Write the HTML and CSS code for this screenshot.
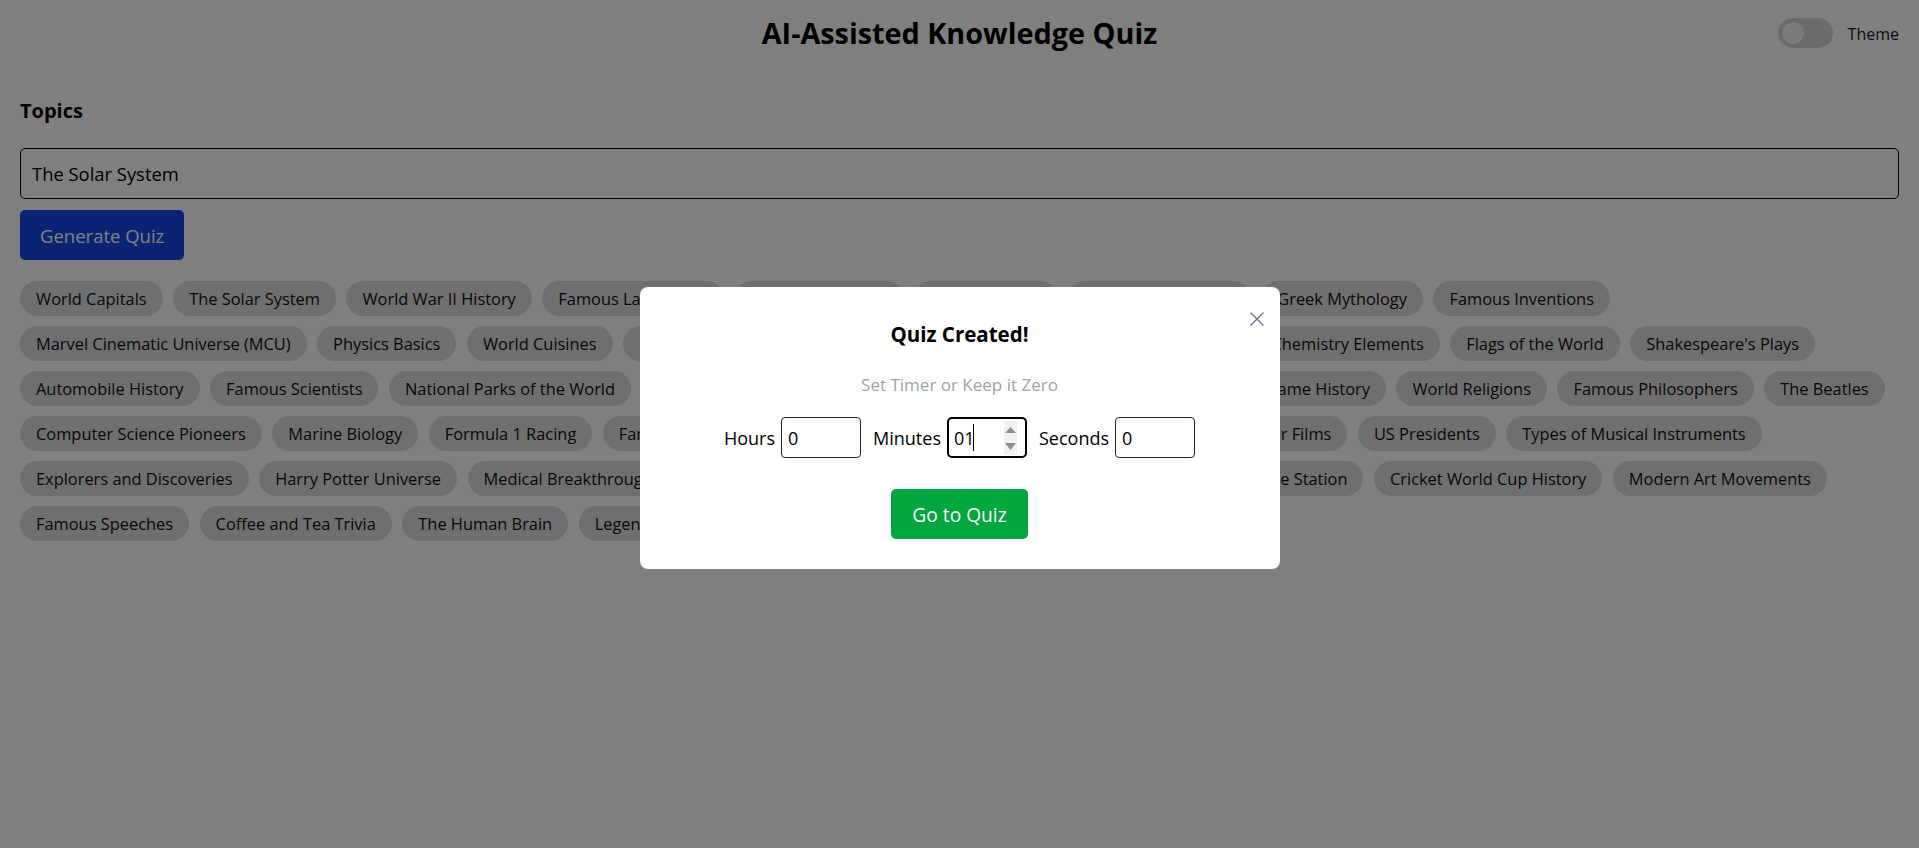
FILE: index.html
```html
<!DOCTYPE html>
<html lang="en">
<head>
<meta charset="utf-8">
<title>AI-Assisted Knowledge Quiz</title>
<link rel="stylesheet" href="styles.css">
</head>
<body>
<div class="app">
  <header class="topbar">
    <h1 class="title">AI-Assisted Knowledge Quiz</h1>
    <label class="theme-toggle">
      <span class="switch"><span class="knob"></span></span>
      <span class="theme-label">Theme</span>
    </label>
  </header>
  <main class="main">
    <section class="form">
      <h2 class="section-title">Topics</h2>
      <input class="topic-input" type="text" value="The Solar System">
      <button class="btn-generate" type="button">Generate Quiz</button>
    </section>
    <div class="chips">
      <span class="chip">World Capitals</span>
      <span class="chip">The Solar System</span>
      <span class="chip">World War II History</span>
      <span class="chip">Famous Landmarks</span>
      <span class="chip">Space Exploration</span>
      <span class="chip">Mount Everest</span>
      <span class="chip">Ancient Civilizations</span>
      <span class="chip">Greek Mythology</span>
      <span class="chip">Famous Inventions</span>
      <span class="chip">Marvel Cinematic Universe (MCU)</span>
      <span class="chip">Physics Basics</span>
      <span class="chip">World Cuisines</span>
      <span class="chip">Famous Paintings</span>
      <span class="chip">Ocean Currents</span>
      <span class="chip">Coral Reefs</span>
      <span class="chip">Renaissance Art</span>
      <span class="chip">Chemistry Elements</span>
      <span class="chip">Flags of the World</span>
      <span class="chip">Shakespeare's Plays</span>
      <span class="chip">Automobile History</span>
      <span class="chip">Famous Scientists</span>
      <span class="chip">National Parks of the World</span>
      <span class="chip">Roman Empire</span>
      <span class="chip">Classical Music</span>
      <span class="chip">Weather</span>
      <span class="chip">Human Body</span>
      <span class="chip">Video Game History</span>
      <span class="chip">World Religions</span>
      <span class="chip">Famous Philosophers</span>
      <span class="chip">The Beatles</span>
      <span class="chip">Computer Science Pioneers</span>
      <span class="chip">Marine Biology</span>
      <span class="chip">Formula 1 Racing</span>
      <span class="chip">Famous Artists</span>
      <span class="chip">Wonders of the World</span>
      <span class="chip">Rainforests</span>
      <span class="chip">Bird Species</span>
      <span class="chip">Pixar Films</span>
      <span class="chip">US Presidents</span>
      <span class="chip">Types of Musical Instruments</span>
      <span class="chip">Explorers and Discoveries</span>
      <span class="chip">Harry Potter Universe</span>
      <span class="chip">Medical Breakthroughs</span>
      <span class="chip">Ancient Greece</span>
      <span class="chip">World Geography</span>
      <span class="chip">Glaciers</span>
      <span class="chip">International Space Station</span>
      <span class="chip">Cricket World Cup History</span>
      <span class="chip">Modern Art Movements</span>
      <span class="chip">Famous Speeches</span>
      <span class="chip">Coffee and Tea Trivia</span>
      <span class="chip">The Human Brain</span>
      <span class="chip">Legendary Athletes</span>
      <span class="chip">Mythical Creatures</span>
    </div>
  </main>
</div>

<div class="overlay">
  <div class="modal" role="dialog" aria-modal="true">
    <button class="close" type="button" aria-label="Close">
      <svg viewBox="0 0 14 14" width="14" height="14"><path d="M1 1 L13 13 M13 1 L1 13" stroke="#64748b" stroke-width="1.4" fill="none" stroke-linecap="round"/></svg>
    </button>
    <h3 class="modal-title">Quiz Created!</h3>
    <p class="modal-sub">Set Timer or Keep it Zero</p>
    <div class="timer">
      <label class="field">Hours <input class="time-input" type="text" value="0"></label>
      <label class="field">Minutes
        <span class="spin-wrap">
          <input class="time-input focused" type="text" value="01">
          <span class="caret"></span>
          <span class="spinner">
            <svg viewBox="0 0 13 34" width="13" height="34"><path d="M1 12 L6.5 6 L12 12 Z" fill="#8f8f8f"/><path d="M1 22 L6.5 29 L12 22 Z" fill="#8f8f8f"/></svg>
          </span>
        </span>
      </label>
      <label class="field">Seconds <input class="time-input" type="text" value="0"></label>
    </div>
    <button class="btn-go" type="button">Go to Quiz</button>
  </div>
</div>
</body>
</html>
```
FILE: styles.css
```css
* { box-sizing: border-box; }

html, body {
  margin: 0;
  height: 100%;
}

body {
  font-family: "Open Sans", "Noto Sans", sans-serif;
  color: #111827;
  background: #ffffff;
  overflow: hidden;
}

.app {
  min-height: 100vh;
}

.topbar {
  display: grid;
  grid-template-columns: 1fr auto 1fr;
  align-items: center;
  height: 64px;
  padding: 0 20px;
}

.title {
  grid-column: 2;
  margin: 2px 0 0;
  font-size: 28.8px;
  font-weight: 700;
  line-height: 34px;
  color: #000;
}

.theme-toggle {
  grid-column: 3;
  justify-self: end;
  display: flex;
  align-items: center;
  gap: 15px;
  margin-top: 2px;
}

.switch {
  width: 55px;
  height: 30px;
  border-radius: 15px;
  background: #d6d6d8;
  display: flex;
  align-items: center;
  padding: 0 3px;
}

.knob {
  width: 24px;
  height: 24px;
  border-radius: 50%;
  background: #f5f5f5;
  border: 1px solid #d0d0d0;
}

.theme-label {
  font-size: 16px;
  font-weight: 500;
  color: #0f172a;
  padding-top: 2px;
}

.main {
  padding: 0 20px;
}

.section-title {
  margin: 32.5px 0 24.5px;
  font-size: 20px;
  font-weight: 700;
  line-height: 27px;
  color: #000;
}

.topic-input {
  display: block;
  width: 100%;
  height: 51px;
  padding: 0 11px;
  font-family: inherit;
  font-size: 18.4px;
  color: #000;
  background: #fff;
  border: 1px solid #000;
  border-radius: 5px;
}

.btn-generate {
  display: block;
  margin-top: 11px;
  height: 50px;
  padding: 0 20px;
  font-family: inherit;
  font-size: 18.5px;
  color: #fff;
  background: #1447e6;
  border: 0;
  border-radius: 5px;
}

.chips {
  margin: 21px 4px 0 0;
  display: flex;
  flex-wrap: wrap;
  gap: 10px 10.5px;
}

.chip {
  height: 35px;
  padding: 0 16px;
  border-radius: 18px;
  background: #dedede;
  font-size: 16.4px;
  line-height: 35px;
  color: #111;
  white-space: nowrap;
}

.overlay {
  position: fixed;
  inset: 0;
  background: rgba(0, 0, 0, 0.5);
  display: flex;
  justify-content: center;
  align-items: center;
  padding-top: 8px;
}

.modal {
  position: relative;
  width: 640px;
  background: #fff;
  border-radius: 8px;
  padding: 33px 24px 30px;
  display: flex;
  flex-direction: column;
  align-items: center;
}

.close {
  position: absolute;
  top: 25px;
  right: 16px;
  width: 14px;
  height: 14px;
  padding: 0;
  border: 0;
  background: none;
  display: block;
}

.close svg { display: block; }

.modal-title {
  margin: 0;
  font-size: 20.5px;
  font-weight: 700;
  line-height: 28px;
  color: #000;
}

.modal-sub {
  margin: 26px 0 0;
  font-size: 17px;
  font-weight: 500;
  line-height: 22px;
  color: #9ca3af;
}

.timer {
  margin-top: 21px;
  display: flex;
  align-items: center;
  gap: 12px;
}

.field {
  display: flex;
  align-items: center;
  gap: 6px;
  font-size: 18px;
  color: #000;
}

.spin-wrap {
  position: relative;
  display: block;
}

.time-input {
  display: block;
  width: 80px;
  height: 41px;
  padding: 0 6px;
  font-family: inherit;
  font-size: 18px;
  color: #000;
  background: #fff;
  border: 1px solid #222;
  border-radius: 4px;
}

.time-input.focused {
  border: 2px solid #000;
  padding: 0 5px;
  border-radius: 5px;
}

.caret {
  position: absolute;
  left: 26px;
  top: 7px;
  width: 1px;
  height: 27px;
  background: #000;
}

.spinner {
  position: absolute;
  right: 10px;
  top: 4px;
  width: 13px;
  height: 34px;
  background: #f1f1f1;
}

.spinner svg { display: block; }

.btn-go {
  margin-top: 31px;
  height: 50px;
  padding: 0 21px;
  font-family: inherit;
  font-size: 19.2px;
  color: #fff;
  background: #00a63e;
  border: 0;
  border-radius: 5px;
}
```
